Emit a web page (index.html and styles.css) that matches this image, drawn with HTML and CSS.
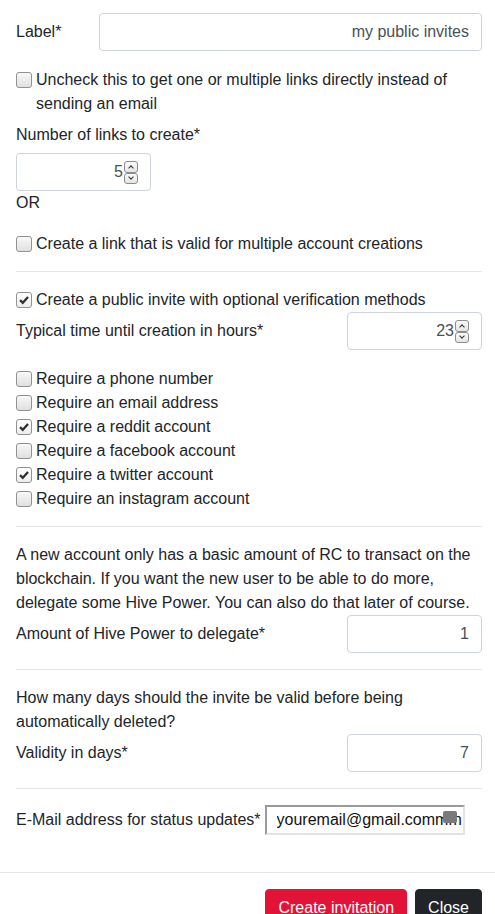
FILE: index.html
```html
<!DOCTYPE html>
<html lang="en">
<head>
    <meta charset="UTF-8">
    <meta name="viewport" content="width=device-width, initial-scale=1.0">
    <title>Create invitation</title>
    <link rel="stylesheet" href="styles.css">
</head>
<body>
    <div class="modal-body">
        <div class="field-row first">
            <label for="label">Label*</label>
            <input id="label" class="form-control wide" type="text" value="my public invites">
        </div>

        <label class="check gap-after-small">
            <input type="checkbox">
            <span>Uncheck this to get one or multiple links directly instead of sending an email</span>
        </label>

        <label class="plain-label" for="count">Number of links to create*</label>
        <div class="num-box">
            <input id="count" type="text" value="5">
            <span class="spin"><span class="spin-btn up"></span><span class="spin-btn down"></span></span>
        </div>
        <div class="or">OR</div>

        <label class="check">
            <input type="checkbox">
            <span>Create a link that is valid for multiple account creations</span>
        </label>

        <hr class="hr-a">

        <label class="check">
            <input type="checkbox" checked>
            <span>Create a public invite with optional verification methods</span>
        </label>
        <div class="field-row gap-after">
            <label for="hours">Typical time until creation in hours*</label>
            <div class="num-box">
                <input id="hours" type="text" value="23">
                <span class="spin"><span class="spin-btn up"></span><span class="spin-btn down"></span></span>
            </div>
        </div>

        <div class="check-list">
            <label class="check"><input type="checkbox"><span>Require a phone number</span></label>
            <label class="check"><input type="checkbox"><span>Require an email address</span></label>
            <label class="check"><input type="checkbox" checked><span>Require a reddit account</span></label>
            <label class="check"><input type="checkbox"><span>Require a facebook account</span></label>
            <label class="check"><input type="checkbox" checked><span>Require a twitter account</span></label>
            <label class="check"><input type="checkbox"><span>Require an instagram account</span></label>
        </div>

        <hr class="hr-a">

        <p>A new account only has a basic amount of RC to transact on the blockchain. If you want the new user to be able to do more, delegate some Hive Power. You can also do that later of course.</p>
        <div class="field-row">
            <label for="hp">Amount of Hive Power to delegate*</label>
            <input id="hp" class="form-control short" type="text" value="1">
        </div>

        <hr>

        <p>How many days should the invite be valid before being automatically deleted?</p>
        <div class="field-row">
            <label for="days">Validity in days*</label>
            <input id="days" class="form-control short" type="text" value="7">
        </div>

        <hr>

        <div class="email-row">
            <label for="email">E-Mail address for status updates*</label>
            <span class="email-wrap">
                <input id="email" class="plain-input" type="text" value="youremail@gmail.commm">
                <span class="autofill"></span>
            </span>
        </div>
    </div>

    <div class="modal-footer">
        <button class="btn btn-red">Create invitation</button>
        <button class="btn btn-dark">Close</button>
    </div>
</body>
</html>
```

FILE: styles.css
```css
body {
    margin: 0;
    font-family: "Liberation Sans", Arial, sans-serif;
    font-size: 16px;
    line-height: 24px;
    color: #212529;
    background-color: #fff;
}
.modal-body {
    padding: 13px 13px 37px 16px;
}
p {
    margin: 0;
}
hr {
    border: 0;
    border-top: 1px solid #e6e6e6;
    margin: 16px 0;
}
.hr-a {
    margin-top: 15px;
}
.field-row {
    display: flex;
    align-items: center;
    justify-content: space-between;
}
.field-row.first {
    margin-bottom: 17px;
}
.gap-after {
    margin-bottom: 17px;
}
.gap-after-small {
    margin-bottom: 7px;
}
.form-control {
    box-sizing: border-box;
    height: 38px;
    padding: 6px 12px;
    border: 1px solid #ced4da;
    border-radius: 4px;
    font: inherit;
    color: #495057;
    text-align: right;
    outline: none;
}
.wide {
    width: 383px;
}
.short {
    width: 135px;
}
.plain-label {
    display: block;
    margin-bottom: 6px;
}
.num-box {
    box-sizing: border-box;
    display: flex;
    align-items: center;
    width: 135px;
    height: 38px;
    padding: 0 12px;
    border: 1px solid #ced4da;
    border-radius: 4px;
}
.num-box input {
    flex: 1;
    min-width: 0;
    border: none;
    padding: 0;
    font: inherit;
    color: #495057;
    text-align: right;
    outline: none;
}
.spin {
    display: flex;
    flex-direction: column;
    margin-left: 1px;
    width: 14px;
}
.spin-btn {
    box-sizing: border-box;
    height: 12px;
    border: 1px solid #8d8d8d;
    border-radius: 3px;
    background: linear-gradient(#fafafa, #e4e4e4);
    position: relative;
}
.spin-btn.down {
    height: 11px;
}
.spin-btn::after {
    content: "";
    position: absolute;
    left: 4px;
    width: 3px;
    height: 3px;
    border-left: 1.5px solid #333;
    border-top: 1.5px solid #333;
}
.spin-btn.up::after {
    top: 4px;
    transform: rotate(45deg);
}
.spin-btn.down::after {
    top: 1px;
    transform: rotate(225deg);
}
.or {
    margin-bottom: 17px;
}
.check {
    display: flex;
    align-items: flex-start;
}
.check input {
    appearance: none;
    -webkit-appearance: none;
    flex: none;
    box-sizing: border-box;
    width: 16px;
    height: 16px;
    margin: 4px 4px 0 0;
    border: 1px solid #929292;
    border-radius: 3px;
    background: linear-gradient(#f8f8f8, #e0e0e0);
}
.check input:checked {
    background: url("data:image/svg+xml,%3Csvg xmlns='http://www.w3.org/2000/svg' viewBox='0 0 16 16'%3E%3Cpath d='M3.5 8.2 6.6 11.2 12.6 4.6' fill='none' stroke='%23303030' stroke-width='2.6'/%3E%3C/svg%3E") center / 14px 14px no-repeat, linear-gradient(#ffffff, #ececec);
}
.check-list {
    display: flex;
    flex-direction: column;
}
.email-row {
    display: flex;
    align-items: center;
    gap: 4px;
    height: 30px;
}
.email-wrap {
    position: relative;
    display: inline-block;
}
.plain-input {
    box-sizing: border-box;
    width: 200px;
    height: 30px;
    padding: 0 1px 0 10px;
    border: 2px solid #e3e3e3;
    border-top-color: #9a9a9a;
    border-left-color: #9a9a9a;
    font: inherit;
    color: #111;
    outline: none;
}
.autofill {
    position: absolute;
    top: 6px;
    right: 8px;
    width: 14px;
    height: 12px;
    border-radius: 2px;
    background-color: #7a7a7a;
}
.modal-footer {
    display: flex;
    justify-content: flex-end;
    gap: 8px;
    padding: 16px 13px 16px 16px;
    border-top: 1px solid #e6e6e6;
}
.btn {
    font: inherit;
    line-height: 24px;
    padding: 6px 12px;
    border-radius: 4px;
    border: 1px solid transparent;
    color: #fff;
    cursor: pointer;
}
.btn-red {
    background-color: #e31337;
    border-color: #e31337;
}
.btn-dark {
    background-color: #212529;
    border-color: #212529;
}
```
